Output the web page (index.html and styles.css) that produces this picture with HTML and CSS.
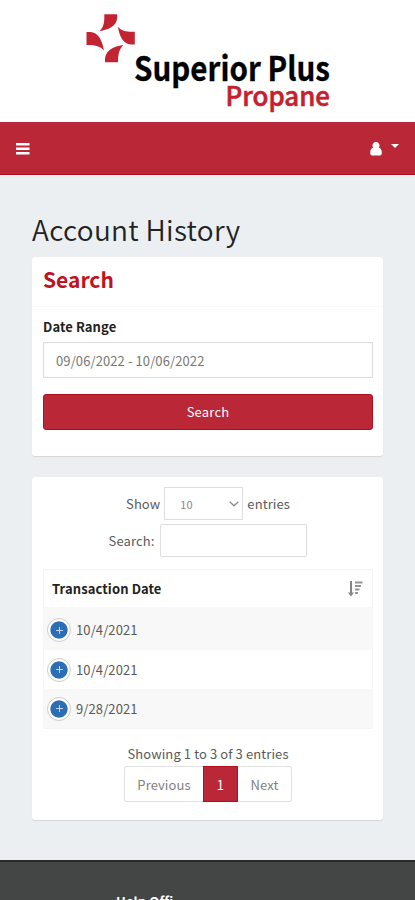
FILE: index.html
```html
<!DOCTYPE html>
<html lang="en">
<head>
<meta charset="utf-8">
<title>Account History</title>
<link rel="stylesheet" href="styles.css">
</head>
<body>
<header class="brand">
  <svg class="logo" width="250" height="104" viewBox="84 10 250 104" role="img" aria-label="Superior Plus Propane">
    <g fill="#c32431">
      <path d="M104.3 14.3H117.2V18C116.5 26 109 29.5 99.3 31.2C103.5 27.500 104.6 23 104.300 14.300Z"/>
      <path d="M134.800 31.800V44.600H131C123 43.500 119.500 37 118 26.800C121.500 31 126 32 134.800 31.800Z"/>
      <path d="M118 62.300H105V58.500C106 50.500 113 46.500 123.500 45C119.500 48.500 118 53.500 118 62.300Z"/>
      <path d="M86.500 45V32H90.500C98 32.500 102 39.500 104 50.300C100 46 95 44.800 86.500 45Z"/>
    </g>
    <text class="logo-main" x="134" y="80.500" textLength="196" lengthAdjust="spacingAndGlyphs">Superior Plus</text>
    <text class="logo-sub" x="225.500" y="106" textLength="104.500" lengthAdjust="spacingAndGlyphs">Propane</text>
  </svg>
</header>
<nav class="navbar">
  <svg width="14" height="12" viewBox="0 0 14 12"><path d="M0 0h13.500v2.500H0zM0 4.500h13.500V7H0zM0 9h13.500v2.500H0z" fill="#fff"/></svg>
  <div class="user">
    <svg width="12" height="14" viewBox="0 0 12 14"><path d="M6 0a3.400 3.400 0 0 1 2.700 5.600C11 6.300 11.800 8.500 11.800 11c0 1.700-.9 2.500-2.200 2.500H2.400C1.100 13.500.2 12.700.2 11c0-2.500.8-4.700 3.100-5.400A3.400 3.400 0 0 1 6 0Z" fill="#fff"/></svg>
    <span class="caret"></span>
  </div>
</nav>
<main class="content">
  <h1>Account History</h1>
  <section class="card search-card">
    <h2>Search</h2>
    <div class="card-body">
      <label class="field-label">Date Range</label>
      <div class="input">09/06/2022 - 10/06/2022</div>
      <button class="submit">Search</button>
    </div>
  </section>
  <section class="card results">
    <div class="length"><span>Show</span>
      <span class="select">10<svg width="10" height="6" viewBox="0 0 10 6"><path d="M.7.700 5 4.800 9.300.700" fill="none" stroke="#8b8b8b" stroke-width="1.200"/></svg></span>
      <span>entries</span></div>
    <div class="filter"><span>Search:</span><span class="filter-box"></span></div>
    <div class="table">
      <div class="thead"><span>Transaction Date</span>
        <svg width="15" height="16" viewBox="0 0 15 16"><path d="M3 0v13" stroke="#858585" stroke-width="2"/><path d="M0 11.500h6L3 15.500Z" fill="#858585"/><path d="M7 1.500h7.500M7 5h6M7 8.500h4.500M7 12h3" stroke="#969696" stroke-width="2.200"/></svg>
      </div>
      <div class="row first odd"><i class="plus"></i><span>10/4/2021</span></div>
      <div class="row"><i class="plus"></i><span>10/4/2021</span></div>
      <div class="row odd"><i class="plus"></i><span>9/28/2021</span></div>
    </div>
    <div class="info">Showing 1 to 3 of 3 entries</div>
    <div class="pager"><span class="prev">Previous</span><span class="current">1</span><span class="next">Next</span></div>
  </section>
</main>
<footer class="footer"><strong>Help Offi</strong></footer>
</body>
</html>
```
FILE: styles.css
```css
* { box-sizing: border-box; }
body {
  margin: 0;
  height: 900px;
  overflow: hidden;
  display: flex;
  flex-direction: column;
  background: #ebeff2;
  color: #5a5a5a;
  font: 13px/20px "Noto Sans CJK SC", "Noto Sans", sans-serif;
  letter-spacing: .1px;
}
svg { display: block; }
.brand { height: 122px; flex: none; background: #fff; padding: 10px 0 0 84px; }
.logo { letter-spacing: 0; }
.logo-main { font: bold 33px "Noto Sans CJK SC", sans-serif; fill: #000; stroke: #000; stroke-width: .3px; }
.logo-sub { font: 500 27px "Noto Sans CJK SC", sans-serif; fill: #c5202c; stroke: #c5202c; stroke-width: .6px; }
.navbar {
  height: 53px;
  flex: none;
  display: flex;
  align-items: center;
  justify-content: space-between;
  padding: 0 15px 0 16px;
  background: #ba2737;
  border-top: 1px solid #b32635;
  border-bottom: 1px solid #a90f1c;
}
.user { display: flex; align-items: center; gap: 9px; margin-right: 1px; }
.caret { border: 4.500px solid transparent; border-top-color: #fff; border-bottom: 0; margin-bottom: 5px; }
.content { flex: none; height: 685px; padding: 34px 32px 0; }
h1 { margin: 0; height: 48px; font-size: 28px; line-height: 40px; font-weight: 350; color: #222; letter-spacing: .3px; }
.card { background: #fff; border-radius: 3px; box-shadow: 0 1px 1px rgba(0, 0, 0, .1); }
.search-card { height: 199px; }
h2 { margin: 0; height: 50px; padding: 7px 11px; font-size: 21px; line-height: 30px; color: #c0121f; border-bottom: 1px solid #f8f8f8; letter-spacing: 0; }
.card-body { padding: 10px 10px 0 11px; }
.field-label { display: block; height: 25px; font-weight: 700; color: #222; }
.input { height: 36px; border: 1px solid #d8dadd; padding: 0 12px; line-height: 35px; color: #777; }
.submit { display: block; width: 100%; height: 36px; margin-top: 16px; padding: 0; border: 1px solid #b10d1d; border-radius: 3px; background: #ba2737; color: #fff; font: inherit; letter-spacing: .2px; }
.results { height: 343px; margin-top: 21px; padding: 10px 10px 0 11px; }
.length { display: flex; align-items: center; justify-content: center; gap: 4px; height: 33px; }
.select { width: 79px; height: 33px; border: 1px solid #dedede; display: flex; align-items: center; justify-content: space-between; padding: 0 3px 0 15px; font-size: 11px; color: #888; }
.filter { display: flex; align-items: center; justify-content: center; gap: 6px; height: 33px; margin-top: 4px; }
.filter-box { width: 147px; height: 33px; border: 1px solid #dedede; border-radius: 2px; }
.table { margin-top: 12px; border: 1px solid #f5f5f5; }
.thead { height: 37px; display: flex; align-items: center; justify-content: space-between; padding: 0 9px 0 8px; font-weight: 700; color: #222; }
.row { height: 39px; display: flex; align-items: center; gap: 5px; padding: 0 3px; }
.first { height: 43px; padding-top: 3px; }
.odd { background: #f8f8f8; }
.plus { width: 24px; height: 24px; border: 1px solid #ccc; border-radius: 50%; background: linear-gradient(#c3d8ef, #c3d8ef) center/7px 1px no-repeat, linear-gradient(#c3d8ef, #c3d8ef) center/1px 7px no-repeat, radial-gradient(circle, #2b6eb5 8.200px, #fff 9px); }
.info { text-align: center; margin-top: 15px; }
.pager { display: flex; width: 168px; height: 36px; margin: 2px auto 0; border: 1px solid #e1e1e1; border-radius: 3px; line-height: 36px; text-align: center; color: #818181; }
.prev { width: 78px; }
.current { width: 35px; margin: -1px 0; background: #ba2737; border: 1px solid #b10d1d; color: #fff; }
.next { flex: 1; }
.footer { flex: 1; background: #444645; border-top: 2px solid #292b2a; padding: 30px 0 0 116px; color: #fff; white-space: nowrap; }
```
